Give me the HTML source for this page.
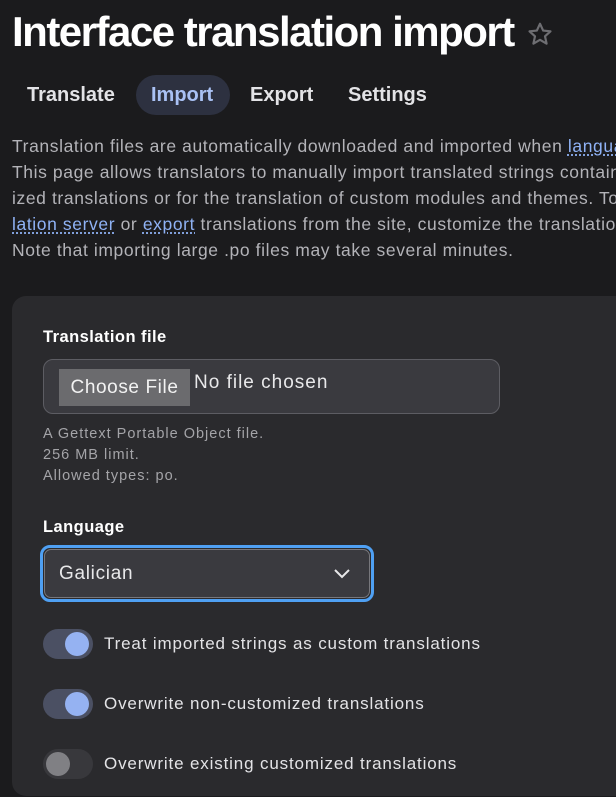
<!DOCTYPE html>
<html><head><meta charset="utf-8"><style>
*{margin:0;padding:0;box-sizing:border-box}
html,body{width:616px;height:797px;overflow:hidden;background:#1b1b1d}
body{font-family:"Liberation Sans",sans-serif;color:#e6e6e8}
#w{position:relative;width:616px;height:797px;overflow:hidden}
.abs{position:absolute;white-space:nowrap}
h1{position:absolute;left:12px;top:8px;font-size:42px;font-weight:bold;color:#fff;letter-spacing:-1.5px;white-space:nowrap}
.tab{position:absolute;top:84px;font-size:20px;font-weight:bold;color:#e3e3e6}
.pill{position:absolute;left:136px;top:75px;width:94px;height:40px;border-radius:20px;background:#2d3140}
.p{position:absolute;left:12px;font-size:17.5px;color:#b3b3b8;white-space:nowrap;letter-spacing:0.6px}
.p a{color:#8fb2f5;text-decoration:underline dotted;text-underline-offset:3px}
.card{position:absolute;left:12px;top:296px;width:620px;height:500px;background:#2a2a2d;border-radius:14px}
.lbl{position:absolute;left:43px;font-size:16.5px;font-weight:bold;color:#fff;letter-spacing:0.45px}
.file{position:absolute;left:43px;top:359px;width:457px;height:55px;border:1px solid #5d5d63;border-radius:10px;background:#3a3a3f}
.btn{position:absolute;left:15px;top:9px;width:131px;height:37px;background:#6b6b6e;color:#f2f2f2;font-size:19px;line-height:37px;text-align:center;letter-spacing:0.6px}
.nf{position:absolute;left:150px;top:12px;font-size:19px;color:#e8e8ea;letter-spacing:1px}
.help{position:absolute;left:43px;top:424px;font-size:14.5px;line-height:21px;color:#a4a4a8;letter-spacing:1px}
.sel{position:absolute;left:40px;top:545px;width:334px;height:57px;border:3px solid #4fa0f3;border-radius:10px;background:#2a2a2d}
.sel div{position:absolute;left:1px;top:1px;right:1px;bottom:1px;border:1px solid #77777c;border-radius:7px;background:#3a3a3f}
.sel span{position:absolute;left:16px;top:15px;font-size:19px;color:#e8e8ea;letter-spacing:0.7px}
.tg{position:absolute;left:43px;width:50px;height:30px;border-radius:15px}
.tg i{position:absolute;top:3px;width:24px;height:24px;border-radius:50%}
.on{background:#4b5063}.on i{left:22px;background:#95b2f2}
.off{background:#38383c}.off i{left:3px;background:#808084}
.tl{position:absolute;left:104px;font-size:17px;color:#e3e3e6;letter-spacing:0.85px}
</style></head><body><div id="w">
<h1>Interface translation import</h1>
<svg class="abs" style="left:527px;top:21px" width="26" height="26" viewBox="0 0 24 24"><path d="M12 2.5l2.9 6.3 6.8.7-5.1 4.6 1.5 6.8L12 17.4l-6.1 3.5 1.5-6.8-5.1-4.6 6.8-.7z" fill="none" stroke="#6e6e72" stroke-width="2" stroke-linejoin="round"/></svg>
<div class="pill"></div>
<div class="tab" style="left:27px">Translate</div>
<div class="tab" style="left:151px;color:#a9c1f4">Import</div>
<div class="tab" style="left:250px">Export</div>
<div class="tab" style="left:348px">Settings</div>
<div class="p" style="top:136px">Translation files are automatically downloaded and imported when <a>languages</a></div>
<div class="p" style="top:162px">This page allows translators to manually import translated strings contained</div>
<div class="p" style="top:188px">ized translations or for the translation of custom modules and themes. To</div>
<div class="p" style="top:214px"><a>lation server</a> or <a>export</a> translations from the site, customize the translations</div>
<div class="p" style="top:240px">Note that importing large .po files may take several minutes.</div>
<div class="card"></div>
<div class="lbl" style="top:328px">Translation file</div>
<div class="file"><div class="btn">Choose File</div><div class="nf">No file chosen</div></div>
<div class="help">A Gettext Portable Object file.<br>256 MB limit.<br>Allowed types: po.</div>
<div class="lbl" style="top:518px">Language</div>
<div class="sel"><div></div><span>Galician</span>
<svg style="position:absolute;left:290px;top:20px" width="18" height="12" viewBox="0 0 18 12"><path d="M2 2l7 7 7-7" fill="none" stroke="#e8e8ea" stroke-width="2"/></svg></div>
<div class="tg on" style="top:629px"><i></i></div><div class="tl" style="top:634px">Treat imported strings as custom translations</div>
<div class="tg on" style="top:689px"><i></i></div><div class="tl" style="top:694px">Overwrite non-customized translations</div>
<div class="tg off" style="top:749px"><i></i></div><div class="tl" style="top:754px">Overwrite existing customized translations</div>
</div></body></html>
